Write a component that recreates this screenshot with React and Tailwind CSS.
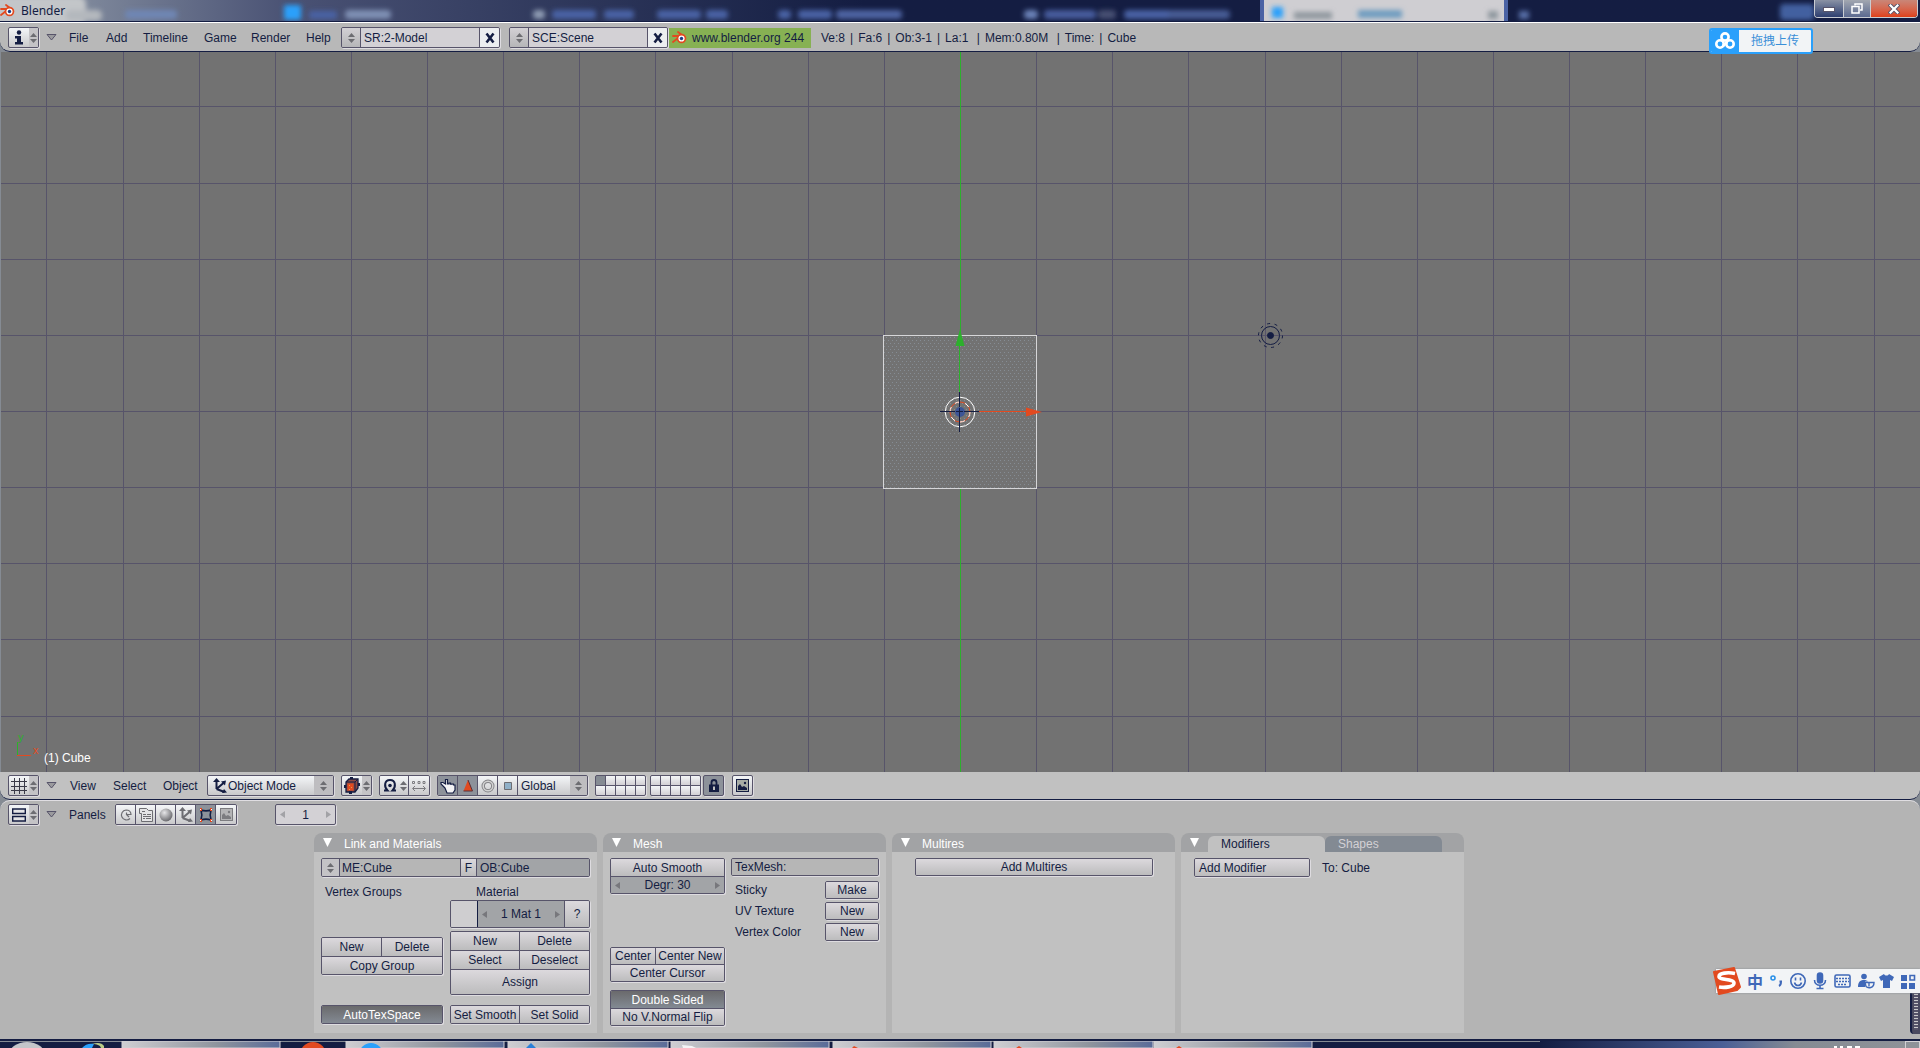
import clsx from "clsx";

const FRAME = "rounded-[2px] border border-[#57546a] shadow-[1px_1px_0_#dedce0]";
const RAISED = "bg-linear-to-b from-[#dcd9dd] to-[#bcbcbd]";
const LIGHT = "bg-linear-to-b from-[#f4f6f8] to-[#c9c9cb]";
const SUNKEN = "bg-[#a2a4a7]";
const PRESSED = "bg-linear-to-b from-[#6a6a6c] to-[#838a93] text-white";

/* ---------- small shared pieces ---------- */

function UpDown({ className }) {
  return (
    <span className={clsx("flex items-center justify-center", className)}>
      <svg width="7" height="10" viewBox="0 0 7 10" fill="#6d6d72">
        <path d="M3.5 0 7 4H0zM3.5 10 0 6h7z" />
      </svg>
    </span>
  );
}

function EditorType({ label, children }) {
  return (
    <button aria-label={label} className={clsx("flex h-[21px] w-[31px] shrink-0", FRAME, LIGHT)}>
      <span className="flex h-full w-5 items-center justify-center">{children}</span>
      <UpDown className="h-full flex-1 bg-[#c4c3c6]" />
    </button>
  );
}

function Collapse() {
  return (
    <button aria-label="Collapse menus" className="ml-[7px] w-[11px] shrink-0">
      <svg width="11" height="7" viewBox="0 0 11 7">
        <path d="M1 .5h9L5.500 6z" fill="#9a9a9d" stroke="#57546a" />
      </svg>
    </button>
  );
}

function Menu({ className, children }) {
  return <button className={clsx("shrink-0 text-left whitespace-nowrap", className)}>{children}</button>;
}

function Group({ className, children }) {
  return <div className={clsx("flex overflow-hidden", FRAME, className)}>{children}</div>;
}

function Cell({ className, tone = RAISED, children }) {
  return (
    <button
      className={clsx(
        "flex items-center justify-center overflow-hidden whitespace-nowrap border-[#57546a]",
        tone,
        className
      )}
    >
      {children}
    </button>
  );
}

function IconCell({ label, active, last, children }) {
  return (
    <button
      aria-label={label}
      className={clsx(
        "flex h-full w-5 shrink-0 items-center justify-center border-[#57546a]",
        active ? "bg-[#8d929a]" : LIGHT,
        !last && "border-r"
      )}
    >
      {children}
    </button>
  );
}

function Datablock({ label, value, className }) {
  return (
    <Group className={clsx("h-[21px] shrink-0", className)}>
      <button aria-label={`Browse ${label}`} className="w-[19px] border-r border-[#57546a] bg-linear-to-b from-[#d2d0d4] to-[#b6b6b8]">
        <UpDown className="h-full" />
      </button>
      <input aria-label={label} defaultValue={value} className="min-w-0 flex-1 bg-[#d3d1d5] px-[3px] outline-none" />
      <button aria-label={`Delete ${label}`} className="flex w-5 items-center justify-center border-l border-[#57546a] bg-[#eceef0]">
        <svg width="10" height="12" viewBox="0 0 10 12" stroke="#141d42" strokeWidth="2.600">
          <path d="M1.500 1.500l7 9M8.500 1.500l-7 9" />
        </svg>
      </button>
    </Group>
  );
}

function BlenderLogo({ className }) {
  return (
    <svg className={className} width="15" height="13" viewBox="0 0 15 13">
      <path d="M6 1l4 3M1 5h7M1 11l5-4" stroke="#e24a20" strokeWidth="1.800" strokeLinecap="round" />
      <circle cx="9.500" cy="7.500" r="4.800" fill="#e24a20" />
      <circle cx="9.500" cy="7.500" r="3.100" fill="#fff" />
      <circle cx="9.500" cy="7.500" r="1.700" fill="#1f3f86" />
    </svg>
  );
}

function AxesIcon({ color = "#141d42" }) {
  return (
    <svg width="16" height="16" viewBox="0 0 16 16" stroke={color} fill={color}>
      <path d="M4.500 11V3M4.500 11l7-6M4.500 11l8 3" strokeWidth="2" fill="none" />
      <path d="M4.500 0L8 4H1zM14 2.500l-1 5-4-4zM15 14.500l-5 .5 2-4z" stroke="none" />
    </svg>
  );
}

function PictureIcon({ color = "#141d42", sky = "#a7aca6" }) {
  return (
    <svg width="13" height="13" viewBox="0 0 13 13">
      <rect x=".5" y=".5" width="12" height="12" fill={sky} stroke={color} />
      <path d="M2 11V7l2-2 2 3 2-1 3 2v2z" fill={color} />
      <circle cx="9" cy="4" r="1.200" fill={color} />
    </svg>
  );
}

/* ---------- window chrome ---------- */

const blurs = [
  [125, 52, "#6f86b4"],
  [345, 46, "#7f90b4"],
  [533, 12, "#8f9cb4"],
  [552, 44, "#4a62a4"],
  [604, 30, "#4a62a4"],
  [657, 44, "#4a62a4"],
  [706, 22, "#4a62a4"],
  [778, 13, "#4a62a4"],
  [798, 34, "#4a62a4"],
  [836, 66, "#4d64a2"],
  [1024, 14, "#6b82b8"],
  [1044, 52, "#465c9c"],
  [1098, 18, "#465072"],
  [1124, 50, "#4a62a4"],
  [1168, 62, "#465c94"],
];

function TitleBar() {
  return (
    <div className="relative flex h-[22px] items-center overflow-hidden border-b border-[#141d42] bg-linear-to-r from-[#959fab] via-[#4a5274] via-15% to-[#141d42] to-45%">
      <svg aria-hidden="true" className="absolute inset-0" width="1920" height="22">
        <defs>
          <filter id="haze" x="-50%" y="-50%" width="200%" height="200%">
            <feGaussianBlur stdDeviation="2.500" />
          </filter>
        </defs>
        <g filter="url(#haze)">
          <rect x="-10" y="-4" width="96" height="30" rx="8" fill="#c3c6c9" />
          <rect x="66" y="10" width="36" height="11" rx="5" fill="#b4b8bd" />
          <rect x="284" y="5" width="17" height="15" rx="2" fill="#2aa0fb" />
          <rect x="309" y="11" width="28" height="8" rx="3" fill="#4a62a4" />
          {blurs.map(([x, w, fill]) => (
            <rect key={x} x={x} y="10" width={w} height="9" rx="4" fill={fill} />
          ))}
          <rect x="1780" y="4" width="34" height="16" rx="4" fill="#4360a0" />
        </g>
        <path d="M1264 22V0h240v22z" fill="#cfced2" />
        <path d="M1260 22V0h4v22zM1504 22V0h4v22z" fill="#4a62a4" />
        <g filter="url(#haze)">
          <rect x="1272" y="7" width="11" height="11" fill="#2aa0fb" />
          <rect x="1294" y="12" width="38" height="7" fill="#8f979e" />
          <rect x="1358" y="10" width="44" height="8" fill="#6e9cc0" />
          <rect x="1488" y="11" width="10" height="8" fill="#8f979e" />
          <rect x="1519" y="11" width="10" height="8" fill="#5870a8" />
        </g>
      </svg>
      <div className="relative flex w-full items-center">
        <BlenderLogo />
        <h1 className="ml-[6px] flex-1 font-['Noto_Sans'] text-[12px] leading-[20px] text-[#141d42]">Blender</h1>
        <div className="mr-[2px] mb-[3px] flex h-[18px] w-[104px] overflow-hidden rounded-b-[4px] border border-t-0 border-[#c9ccd2] text-white">
          <button aria-label="Minimize" className="flex w-[29px] items-center justify-center border-r border-[#c9ccd2] bg-linear-to-b from-[#8a92a4] to-[#2f3f70]">
            <svg width="12" height="6" viewBox="0 0 12 6">
              <rect x=".5" y="1.500" width="11" height="4" fill="#fff" stroke="#57546a" />
            </svg>
          </button>
          <button aria-label="Restore" className="flex w-[27px] items-center justify-center border-r border-[#c9ccd2] bg-linear-to-b from-[#a2a7b0] to-[#5c6a90]">
            <svg width="12" height="11" viewBox="0 0 12 11" fill="none" stroke="#fff" strokeWidth="1.500">
              <path d="M4 2.500V1h7v6H9" />
              <rect x="1" y="3.500" width="7" height="6.500" />
            </svg>
          </button>
          <button aria-label="Close" className="flex flex-1 items-center justify-center bg-linear-to-b from-[#c98678] to-[#de3f16]">
            <svg width="12" height="10" viewBox="0 0 12 10" strokeLinecap="square">
              <path d="M2.500 1.500l7 7M9.500 1.500l-7 7" stroke="#57546a" strokeWidth="4" />
              <path d="M2.500 1.500l7 7M9.500 1.500l-7 7" stroke="#fff" strokeWidth="2.200" />
            </svg>
          </button>
        </div>
      </div>
    </div>
  );
}

function UploadBadge() {
  return (
    <button className="absolute top-[6px] right-[107px] z-10 flex h-[26px] w-[104px] overflow-hidden rounded-[3px] border-2 border-[#2aa0fb] bg-[#f2f4f6] font-['Liberation_Sans','Noto_Sans_CJK_SC',sans-serif] text-[#3a8fd8]">
      <span className="flex h-full w-7 items-center justify-center bg-[#2aa0fb]">
        <svg width="20" height="18" viewBox="0 0 20 18" fill="none" stroke="#fff" strokeWidth="2.600">
          <circle cx="10" cy="5" r="3.600" />
          <circle cx="5" cy="12" r="3.700" />
          <circle cx="15" cy="12" r="3.700" />
          <path d="M8 14l4-4" />
        </svg>
      </span>
      <span className="flex-1 text-center leading-[22px]">拖拽上传</span>
    </button>
  );
}

function InfoHeader() {
  const stats = ["Ve:8", "Fa:6", "Ob:3-1", "La:1 ", "Mem:0.80M ", "Time:", "Cube"];

  return (
    <div className="relative bg-[#858b93]">
      <header className="flex h-[30px] items-center rounded-b-[10px] border-t border-b border-t-white border-b-[#141d42] bg-[#b8b8b8] pt-px pl-2">
        <EditorType label="Info editor">
          <svg width="12" height="15" viewBox="0 0 12 15" fill="#141d42">
            <circle cx="6" cy="2.500" r="2.200" />
            <path d="M2 6h6v6h2v2.500H2V12h2V8.500H2z" />
          </svg>
        </EditorType>
        <Collapse />
        <nav className="flex pl-3">
          <Menu className="w-[37px]">File</Menu>
          <Menu className="w-[37px]">Add</Menu>
          <Menu className="w-[61px]">Timeline</Menu>
          <Menu className="w-[47px]">Game</Menu>
          <Menu className="w-[55px]">Render</Menu>
          <Menu className="w-[35px]">Help</Menu>
        </nav>
        <Datablock label="Screen" value="SR:2-Model" className="w-[159px]" />
        <Datablock label="Scene" value="SCE:Scene" className="ml-[9px] w-[159px]" />
        <a href="#blender" className="ml-px flex h-5 w-[142px] shrink-0 items-center bg-[#87b153] pl-[3px] whitespace-nowrap">
          <BlenderLogo />
          <span className="ml-[5px]">www.blender.org 244</span>
        </a>
        <p className="ml-[10px] flex whitespace-pre">
          {stats.map((stat, i) => (
            <span key={stat} className={clsx(i > 0 && "before:mx-[5px] before:content-['|']")}>
              {stat}
            </span>
          ))}
        </p>
      </header>
      <UploadBadge />
    </div>
  );
}

/* ---------- 3D view ---------- */

const STEP = 76.13;
const columns = Array.from({ length: 25 }, (_, i) => Math.round(960 + (i - 12) * STEP));
const rows = Array.from({ length: 9 }, (_, i) => Math.round(359 + (i - 4) * STEP));

function View3D() {
  return (
    <main className="relative min-h-80 flex-1 overflow-hidden border-l border-[#858b93] bg-[#727272]">
      <svg className="absolute inset-0 h-full w-full" viewBox="1 0 1919 720" preserveAspectRatio="xMidYMid slice">
        <defs>
          <pattern id="stipple" width="4" height="6" patternUnits="userSpaceOnUse">
            <path d="M0 0h1v1H0zM2 3h1v1H2z" fill="#858c93" />
          </pattern>
        </defs>
        <g fill="#57546a" shapeRendering="crispEdges">
          {columns.map((x) => (
            <rect key={x} x={x} y="0" width="1" height="720" />
          ))}
          {rows.map((y) => (
            <rect key={y} x="0" y={y} width="1920" height="1" />
          ))}
        </g>
        <g shapeRendering="crispEdges">
          <rect x="960" y="0" width="1" height="720" fill="#2cb02c" />
          <rect x="883.500" y="283.500" width="153" height="153" fill="#727272" />
          <rect x="883.500" y="283.500" width="153" height="153" fill="url(#stipple)" stroke="#d6d6d8" />
          <path d="M959.500 284v57" stroke="#2cb02c" />
          <path d="M979 359.500h48" stroke="#e24a20" />
        </g>
        <path d="M960 277l4.500 17h-9z" fill="#2cb02c" />
        <path d="M1042 360l-16-4.500v9z" fill="#e24a20" />
        <g fill="none">
          <circle cx="960" cy="360" r="14.800" stroke="#fff" />
          <circle cx="960" cy="360" r="10" stroke="#e24a20" />
          <circle cx="960" cy="360" r="10" stroke="#fff" strokeDasharray="5.200 5.200" />
        </g>
        <circle cx="960" cy="360" r="5" fill="#3c5596" />
        <path d="M940 359.500h15M964 359.500h15M959.500 340v15M959.500 364v16M956 359.500h7M959.500 356v8" stroke="#141d42" shapeRendering="crispEdges" />
        <g fill="none" stroke="#141d42">
          <circle cx="1270.500" cy="283.500" r="9" />
          <circle cx="1270.500" cy="283.500" r="12" strokeDasharray="3 4.540" />
          <circle cx="1270.500" cy="283.500" r="3" fill="#141d42" />
        </g>
      </svg>
      <div className="absolute bottom-[6px] left-[15px] flex items-end text-white">
        <svg width="28" height="34" viewBox="0 0 28 34" fontSize="11" fontFamily="Liberation Sans, sans-serif">
          <path d="M1.500 10v14" stroke="#2cb02c" />
          <path d="M1 23.500h14" stroke="#e24a20" />
          <text x="2" y="9" fill="#2cb02c">y</text>
          <text x="17" y="22" fill="#e24a20">x</text>
        </svg>
        <span className="leading-4">(1) Cube</span>
      </div>
    </main>
  );
}

function Layers({ name, first }) {
  return (
    <div className={clsx("grid h-[21px] w-[51px] shrink-0 grid-cols-5 gap-px overflow-hidden bg-[#57546a]", FRAME)}>
      {Array.from({ length: 10 }, (_, i) => (
        <input
          key={i}
          type="checkbox"
          aria-label={`${name} ${i + 1}`}
          defaultChecked={first && i === 0}
          className="h-[9px] appearance-none bg-linear-to-b from-[#f4f6f8] to-[#d2d0d4] checked:from-[#858b93] checked:to-[#858b93]"
        />
      ))}
    </div>
  );
}

function ViewHeader() {
  return (
    <div className="bg-[#858b93]">
      <header className="flex h-7 items-center rounded-b-[10px] border-b border-[#141d42] bg-[#c1c1c1] pl-2">
        <EditorType label="3D view editor">
          <svg width="16" height="16" viewBox="0 0 16 16" stroke="#3a3a48" shapeRendering="crispEdges">
            <path d="M3.500 0v16M8.500 0v16M13.500 0v16M0 3.500h16M0 8.500h16M0 12.500h16" />
          </svg>
        </EditorType>
        <Collapse />
        <nav className="flex pl-[13px]">
          <Menu className="w-[43px]">View</Menu>
          <Menu className="w-[50px]">Select</Menu>
          <Menu className="w-11">Object</Menu>
        </nav>
        <div className={clsx("flex h-[21px] w-[127px] shrink-0 items-center overflow-hidden pl-1", FRAME, LIGHT)}>
          <AxesIcon />
          <select aria-label="Mode" className="h-full min-w-0 flex-1 appearance-none outline-none">
            <option>Object Mode</option>
          </select>
          <UpDown className="pointer-events-none h-full w-[19px] bg-[#bebdc0]" />
        </div>
        <div className="ml-[7px]">
          <EditorType label="Draw type">
            <svg width="16" height="17" viewBox="0 0 16 17">
              <path d="M2 5l3-3h9v9l-3 4H2z" fill="#8c4a44" stroke="#141d42" strokeWidth="1.300" />
              <path d="M2 5h9l3-3M11 5v10" stroke="#141d42" fill="none" />
              <path d="M3.500 6.500h6v7h-6z" fill="#e24a20" />
              <path d="M5 8h1v1H5zM7 10h1v1H7zM5 12h1v1H5z" fill="#e0a050" />
              <path d="M6 0h3v2H6zM5 14h3v3H5zM0 8h2v3H0zM14 6h2v3h-2z" fill="#141d42" />
            </svg>
          </EditorType>
        </div>
        <Group className="ml-[7px] h-[21px] w-[51px] shrink-0">
          <button aria-label="Pivot" className={clsx("flex w-[29px] border-r border-[#57546a]", LIGHT)}>
            <span className="flex h-full w-[19px] items-center justify-center">
              <svg width="14" height="15" viewBox="0 0 14 15" fill="none" stroke="#141d42" strokeWidth="2">
                <path d="M1 12.500h3.500C1 9 1 2 7 2s6 7 2.500 10.500H13" />
                <circle cx="7" cy="7.500" r="1.800" fill="#141d42" stroke="none" />
              </svg>
            </span>
            <UpDown className="h-full flex-1" />
          </button>
          <IconCell label="Move centers only" last>
            <svg width="14" height="12" viewBox="0 0 14 12" fill="none" stroke="#7c7c80">
              <path d="M.5 1.500h2v2h-2zM6 1.500h2v2H6zM11 1.500h2v2h-2zM1 8.500h12M3 6L.5 8.500 3 11M11 6l2.500 2.500L11 11" />
            </svg>
          </IconCell>
        </Group>
        <Group className="ml-[7px] h-[21px] w-[151px] shrink-0">
          <IconCell label="Manipulator" active>
            <svg width="16" height="16" viewBox="0 0 16 16">
              <path d="M5 10L1 6V4.500h2L5.500 6V1.500h2V6h1.500V5h1.500v1.200H12V6h1.500v1H15v5l-2 3H7z" fill="#f2f2f4" stroke="#141d42" strokeWidth="1.200" />
            </svg>
          </IconCell>
          <IconCell label="Translate" active>
            <svg width="12" height="12" viewBox="0 0 12 12">
              <path d="M6 0l4.500 11h-9z" fill="#e24a20" />
              <path d="M6 0l4.500 11h-9" fill="none" stroke="#57303a" />
            </svg>
          </IconCell>
          <IconCell label="Rotate">
            <svg width="14" height="14" viewBox="0 0 14 14" fill="none">
              <circle cx="7" cy="7" r="4.800" stroke="#858589" strokeWidth="3.400" />
              <circle cx="7" cy="7" r="4.800" stroke="#d2d2d2" strokeWidth="1.500" />
            </svg>
          </IconCell>
          <IconCell label="Scale">
            <svg width="8" height="8" viewBox="0 0 8 8">
              <path d="M.5.5h7v7h-7z" fill="#8fb0c8" stroke="#6d6d72" />
            </svg>
          </IconCell>
          <select aria-label="Orientation" className={clsx("h-full min-w-0 flex-1 appearance-none pl-[3px] outline-none", LIGHT)}>
            <option>Global</option>
          </select>
          <UpDown className="pointer-events-none h-full w-[17px] bg-[#bebdc0]" />
        </Group>
        <div className="ml-[7px] flex gap-1">
          <Layers name="Layer" first />
          <Layers name="Upper layer" />
        </div>
        <button aria-label="Lock layers" className={clsx("ml-[2px] flex h-[21px] w-[21px] shrink-0 items-center justify-center bg-[#8d929a]", FRAME)}>
          <svg width="10" height="13" viewBox="0 0 10 13">
            <path d="M2.500 6V3.500a2.500 2.500 0 015 0V6" fill="none" stroke="#141d42" strokeWidth="1.800" />
            <path d="M0 5.500h10V13H0z" fill="#141d42" />
            <path d="M4 7.500h2V11H4z" fill="#c1c1c1" />
          </svg>
        </button>
        <button aria-label="Render view" className={clsx("ml-2 flex h-[21px] w-[21px] shrink-0 items-center justify-center", FRAME, LIGHT)}>
          <PictureIcon />
        </button>
      </header>
    </div>
  );
}

/* ---------- buttons window ---------- */

function ButtonsHeader() {
  return (
    <header className="flex h-[27px] items-center pl-2">
      <EditorType label="Buttons editor">
        <svg width="14" height="14" viewBox="0 0 14 14" fill="#e4e4e6" stroke="#141d42" strokeWidth="1.400">
          <path d="M.7 1h12.600v4.500H.7zM.7 8.500h12.600V13H.7z" />
        </svg>
      </EditorType>
      <Collapse />
      <Menu className="ml-3 w-[46px]">Panels</Menu>
      <Group className="h-[21px] w-[122px] shrink-0">
        <IconCell label="Logic">
          <svg width="12" height="12" viewBox="0 0 12 12" fill="none" stroke="#6d6d72" strokeWidth="1.200">
            <path d="M10 9.500A5 5 0 116 1c3 0 5 2 5 4.500H6.500V3.500M6.500 5.500L9 8" />
          </svg>
        </IconCell>
        <IconCell label="Script">
          <svg width="14" height="14" viewBox="0 0 14 14" fill="#e4e4e6" stroke="#6d6d72">
            <path d="M.5.5h7l2 2h4v11h-11v-8h-2zM4 6.500h3M8 6.500h4M4 8.500h8M4 10.500h2M7 10.500h5M3 3.500h3" />
          </svg>
        </IconCell>
        <IconCell label="Shading">
          <svg width="14" height="14" viewBox="0 0 14 14">
            <defs>
              <radialGradient id="ball" cx=".38" cy=".32" r=".7">
                <stop offset="0" stopColor="#e6e6e8" />
                <stop offset="1" stopColor="#68686c" />
              </radialGradient>
            </defs>
            <circle cx="7" cy="7" r="6.500" fill="url(#ball)" />
          </svg>
        </IconCell>
        <IconCell label="Object">
          <AxesIcon color="#6d6d72" />
        </IconCell>
        <IconCell label="Editing" active>
          <svg width="14" height="14" viewBox="0 0 14 14">
            <path d="M2 2c3 1 7 1 10 0-1 3-1 7 0 10-3-1-7-1-10 0 1-3 1-7 0-10z" fill="none" stroke="#141d42" strokeWidth="1.600" />
            <path d="M1 0h2v3H1zM11 0h2v3h-2zM1 11h2v3H1zM11 11h2v3h-2z" fill="#e24a20" />
            <path d="M1 1h1v1H1zM12 1h1v1h-1zM1 12h1v1H1zM12 12h1v1h-1z" fill="#fff" />
          </svg>
        </IconCell>
        <IconCell label="Scene" last>
          <PictureIcon color="#7c7c80" sky="#b4b4b6" />
        </IconCell>
      </Group>
      <Group className="ml-[38px] h-[21px] w-[61px] shrink-0 bg-[#d3d1d5]">
        <Stepper label="Frame" value="1" faint />
      </Group>
    </header>
  );
}

function Stepper({ label, value, faint }) {
  const fill = faint ? "#a2a2a6" : "#77777c";
  return (
    <div className="flex h-full w-full items-center px-1">
      <button aria-label={`${label} down`}>
        <svg width="5" height="7" viewBox="0 0 5 7" fill={fill}>
          <path d="M0 3.500L5 0v7z" />
        </svg>
      </button>
      <input aria-label={label} defaultValue={value} className="h-full w-full min-w-0 bg-transparent text-center outline-none" />
      <button aria-label={`${label} up`}>
        <svg width="5" height="7" viewBox="0 0 5 7" fill={fill}>
          <path d="M5 3.500L0 0v7z" />
        </svg>
      </button>
    </div>
  );
}

function Panel({ title, tabs, children }) {
  return (
    <section className="flex w-[283px] shrink-0 flex-col">
      <div className="flex h-[19px] items-center rounded-t-[8px] bg-[#a2a3a5] pl-[9px] text-white">
        <button aria-label="Toggle panel" className="w-[9px]">
          <svg width="9" height="9" viewBox="0 0 9 9" fill="#fff">
            <path d="M0 0h9L4.500 9z" />
          </svg>
        </button>
        {title && <h2 className="ml-3 pt-[2px]">{title}</h2>}
        {tabs && (
          <div className="ml-[9px] flex self-end leading-4">
            <button className="h-4 w-[117px] rounded-t-[6px] bg-[#c1c1c1] pl-[13px] text-left text-[#141d42]">{tabs[0]}</button>
            <button className="h-4 w-[117px] rounded-t-[6px] bg-[#838a93] pl-[13px] text-left text-[#d3d1d5]">{tabs[1]}</button>
          </div>
        )}
      </div>
      <div className="h-[181px] bg-[#c1c1c1] px-[7px] pt-[6px]">{children}</div>
    </section>
  );
}

function LinkPanel() {
  return (
    <Panel title="Link and Materials">
      <Group className="h-[19px] w-[269px]">
        <button aria-label="Browse mesh" className="w-[18px] border-r border-[#57546a] bg-[#c4c3c6]">
          <UpDown className="h-full" />
        </button>
        <input aria-label="Mesh name" defaultValue="ME:Cube" className="w-[120px] bg-[#b6b6b6] pl-[2px] outline-none" />
        <Cell className="w-[17px] border-x">F</Cell>
        <input aria-label="Object name" defaultValue="OB:Cube" className={clsx("min-w-0 flex-1 pl-[3px] outline-none", SUNKEN)} />
      </Group>
      <div className="flex gap-[7px]">
        <div className="w-[122px]">
          <p className="h-[23px] pt-[7px] pl-1 leading-4">Vertex Groups</p>
          <Group className="mt-[37px] h-[38px] flex-wrap">
            <Cell className="h-[18px] w-1/2 border-r">New</Cell>
            <Cell className="h-[18px] w-1/2">Delete</Cell>
            <Cell className="h-[18px] w-full border-t">Copy Group</Cell>
          </Group>
          <Group className="mt-[30px] h-[19px]">
            <Cell tone={PRESSED} className="w-full">AutoTexSpace</Cell>
          </Group>
        </div>
        <div className="w-[140px]">
          <p className="h-[23px] pt-[7px] pl-[26px] leading-4">Material</p>
          <Group className="h-7">
            <span className="w-[27px] shrink-0 border-r border-[#141d42] bg-[#cfced0]" />
            <span className={clsx("w-[86px] shrink-0", SUNKEN)}>
              <Stepper label="Material" value="1 Mat 1" />
            </span>
            <Cell className="flex-1 border-l">?</Cell>
          </Group>
          <Group className="mt-[3px] h-16 flex-wrap">
            <Cell className="h-[18px] w-1/2 border-r">New</Cell>
            <Cell className="h-[18px] w-1/2">Delete</Cell>
            <Cell className="h-[19px] w-1/2 border-t border-r">Select</Cell>
            <Cell className="h-[19px] w-1/2 border-t">Deselect</Cell>
            <Cell className="h-[25px] w-full border-t">Assign</Cell>
          </Group>
          <Group className="mt-[10px] h-[19px]">
            <Cell className="w-1/2 border-r">Set Smooth</Cell>
            <Cell className="w-1/2">Set Solid</Cell>
          </Group>
        </div>
      </div>
    </Panel>
  );
}

function MeshPanel() {
  const layers = [
    ["Sticky", "Make"],
    ["UV Texture", "New"],
    ["Vertex Color", "New"],
  ];

  return (
    <Panel title="Mesh">
      <div className="flex gap-[6px]">
        <div className="w-[115px]">
          <Group className="h-[36px] flex-col">
            <Cell className="h-[17px]">Auto Smooth</Cell>
            <div className={clsx("h-[17px] border-t border-[#57546a]", SUNKEN)}>
              <Stepper label="Degrees" value="Degr: 30" />
            </div>
          </Group>
          <Group className="mt-[53px] h-[35px] flex-wrap">
            <Cell className="h-[16px] w-[45px] border-r">Center</Cell>
            <Cell className="h-[16px] flex-1">Center New</Cell>
            <Cell className="h-[17px] w-full border-t">Center Cursor</Cell>
          </Group>
          <Group className="mt-2 h-[36px] flex-col">
            <Cell tone={PRESSED} className="h-[17px]">Double Sided</Cell>
            <Cell className="h-[17px] border-t">No V.Normal Flip</Cell>
          </Group>
        </div>
        <div className="w-[148px]">
          <Group className="h-[18px]">
            <input aria-label="TexMesh" defaultValue="TexMesh:" className="w-full bg-[#b6b6b6] pl-[3px] outline-none" />
          </Group>
          <div className="mt-[5px] space-y-[3px]">
            {layers.map(([name, action]) => (
              <div key={name} className="flex h-[18px] items-center justify-between pl-1">
                <span>{name}</span>
                <Group className="h-[18px] w-[54px]">
                  <Cell className="w-full">{action}</Cell>
                </Group>
              </div>
            ))}
          </div>
        </div>
      </div>
    </Panel>
  );
}

function InputBar() {
  return (
    <aside className="absolute top-[168px] right-0 flex h-6 w-[204px] items-center bg-[#f2f4f6] shadow-[0_0_2px_#858b93]">
      <svg className="-ml-1 shrink-0" width="30" height="28" viewBox="0 0 30 28">
        <path d="M2 5L22 1l6 19-3 3-18 4z" fill="#e24a20" strokeLinejoin="round" stroke="#e24a20" strokeWidth="2" />
        <path d="M23 6.500C16 5 7 6 7 9.500c0 4 15 2 15 6.500 0 4-9 5-15 4" fill="none" stroke="#fff" strokeWidth="3.600" />
      </svg>
      <button className="ml-[3px] w-5 font-['Noto_Sans_CJK_SC',sans-serif] text-[16px] leading-6 font-bold text-[#3f68b8]">中</button>
      <svg className="ml-[4px] shrink-0" width="148" height="18" viewBox="0 0 148 18" fill="none" stroke="#3f68b8" strokeWidth="1.600">
        <circle cx="4" cy="6" r="2" stroke="#2a90e8" />
        <path d="M10.500 9.500h1.500c0 3-1 4-2 4.500" strokeWidth="2" />
        <circle cx="29" cy="9" r="7.200" />
        <path d="M25.500 10.500c1 4 6 4 7 0M26.500 5.500v3M31.500 5.500v3" />
        <rect x="48.500" y="1" width="5" height="10" rx="2.500" fill="#3f68b8" />
        <path d="M45.500 8c0 7 11 7 11 0M51 13v4M47.500 16.500h7" />
        <rect x="66" y="3" width="15" height="12" rx="1.500" />
        <path d="M67 6.500h13M67 9.500h13M69 12.500h9" strokeDasharray="2 1" />
        <circle cx="95" cy="4.500" r="2.800" fill="#3f68b8" stroke="none" />
        <path d="M89 15c0-6 3-7 6-7 2 0 3 .5 4 1.500h-3V15z" fill="#3f68b8" stroke="none" />
        <path d="M96 10.500h9c0 6-6 6-8 4zM100 10.500v4" strokeWidth="1.400" />
        <path d="M110 5l5-3c1 2 4 2 5 0l5 3-2 4-2-1v8h-7V8l-2 1z" fill="#3f68b8" stroke="none" />
        <path d="M132 3h6v6h-6zM132 11h6v6h-6zM140 11h6v6h-6z" fill="#3f68b8" stroke="none" />
        <path d="M141 3.500h4.500V8H141z" />
      </svg>
    </aside>
  );
}

function ButtonsWindow() {
  return (
    <div className="bg-[#858b93]">
      <div className="relative rounded-t-[10px] border-t border-[#e0dee2] bg-[#b4b4b4]">
        <ButtonsHeader />
        <div className="flex gap-[6px] pt-[5px] pb-[6px] pl-[314px]">
          <LinkPanel />
          <MeshPanel />
          <Panel title="Multires">
            <Group className="mx-4 h-[18px] w-[238px]">
              <Cell className="w-full">Add Multires</Cell>
            </Group>
          </Panel>
          <Panel tabs={["Modifiers", "Shapes"]}>
            <div className="flex items-center pl-[6px]">
              <Group className="h-[19px] w-[116px]">
                <Cell className="w-full justify-start! pl-1">Add Modifier</Cell>
              </Group>
              <span className="ml-3">To: Cube</span>
            </div>
          </Panel>
        </div>
        <div className="absolute right-0 bottom-[5px] flex h-[43px] w-[10px] justify-center rounded-bl-[4px] border-l-2 border-[#141d42] bg-[#4a4a60] pb-1">
          <span className="w-1 bg-[repeating-linear-gradient(#c9c9cb_0_1px,#57546a_1px_3px)]" />
        </div>
        <InputBar />
      </div>
    </div>
  );
}

function Taskbar() {
  const tabs = [
    [122, 158],
    [346, 158],
    [508, 160],
    [671, 158],
    [833, 158],
    [994, 159],
    [1154, 158],
  ];

  return (
    <footer className="h-[9px] border-t-2 border-[#141d42] bg-[#141d42]">
      <svg aria-hidden="true" className="block h-[7px] w-full" viewBox="0 0 1920 7" preserveAspectRatio="xMinYMin slice">
        <defs>
          <linearGradient id="task">
            <stop offset="0" stopColor="#cfced2" />
            <stop offset=".6" stopColor="#8e949d" />
            <stop offset="1" stopColor="#5a6b98" />
          </linearGradient>
          <linearGradient id="tray">
            <stop offset="0" stopColor="#141d42" />
            <stop offset=".5" stopColor="#4a5f96" />
            <stop offset=".7" stopColor="#858b93" />
            <stop offset="1" stopColor="#8e9298" />
          </linearGradient>
        </defs>
        <rect width="1920" height="1" fill="#858b93" />
        <ellipse cx="27" cy="14" rx="18" ry="13" fill="#c4c6ca" />
        <path d="M82 7c3-4 8-5 12-4l-2 4z" fill="#2aa0fb" />
        <path d="M92 3c6-2 10-1 12 2v2h-3c-1-3-4-4-9-4z" fill="#b9cc86" />
        <circle cx="313" cy="14" r="13" fill="#e24a20" />
        {tabs.map(([x, w]) => (
          <rect key={x} x={x} y="0" width={w} height="7" fill="url(#task)" stroke="#d3d1d5" strokeWidth="1" />
        ))}
        <circle cx="371" cy="14" r="12" fill="#2aa0fb" />
        <path d="M531 2l5 5h-10z" fill="#2a80d8" />
        <path d="M682 4l10 1 4 2h-13z" fill="#f4f4f6" />
        <path d="M852 7l2-2 4 2zM1016 7l3-2 3 2zM1176 7l3-2 3 2z" fill="#e24a20" />
        <rect x="1540" width="365" height="7" fill="url(#tray)" />
        <path d="M1834 6h3M1840 6h3M1847 6h5M1855 6h5" stroke="#fff" strokeWidth="2" />
        <rect x="1905.500" y=".5" width="14" height="7" fill="#8e9298" stroke="#d3d1d5" />
      </svg>
    </footer>
  );
}

export default function App() {
  return (
    <div className="flex min-h-screen flex-col overflow-hidden bg-[#b4b4b4] font-['Liberation_Sans',sans-serif] text-[12px] leading-4 text-[#141d42]">
      <TitleBar />
      <InfoHeader />
      <View3D />
      <ViewHeader />
      <ButtonsWindow />
      <Taskbar />
    </div>
  );
}
